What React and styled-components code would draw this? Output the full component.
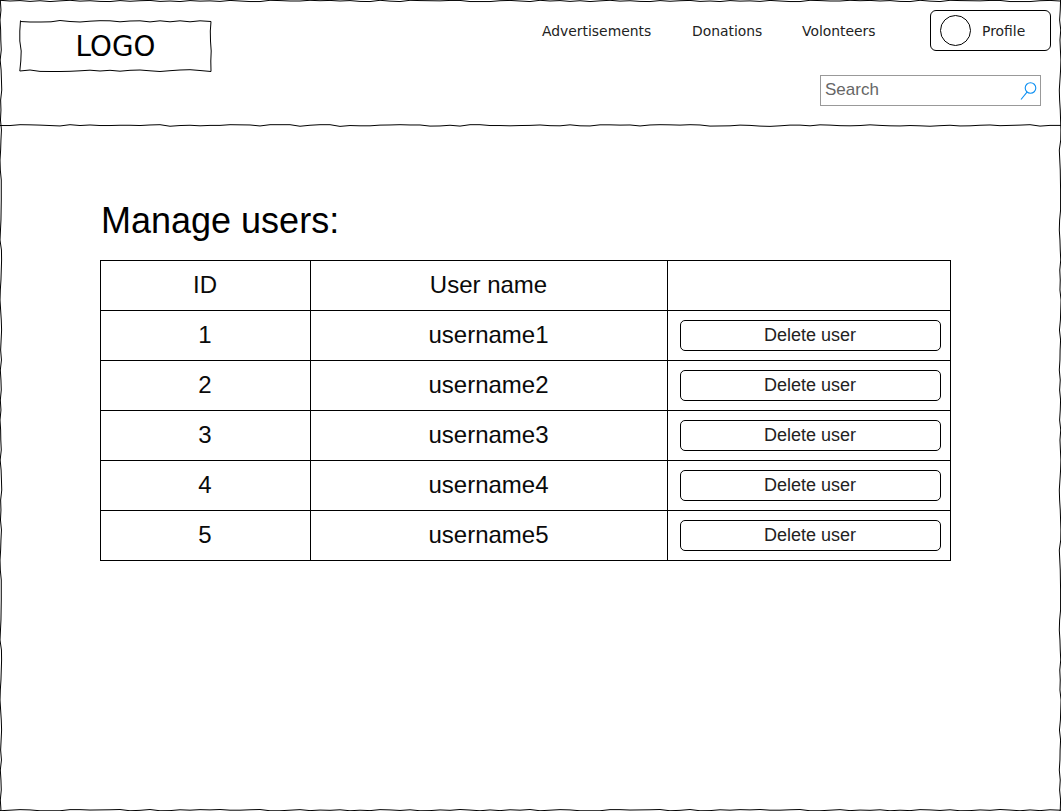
import React from "react";
import styled, { createGlobalStyle } from "styled-components";

const GlobalStyle = createGlobalStyle`
  *, *::before, *::after { box-sizing: border-box; }
  body { margin: 0; background: #fff; color: #000; overflow: hidden; }
`;

const sans = `"Liberation Sans", Arial, sans-serif`;
const ui = `"DejaVu Sans", Verdana, sans-serif`;

const Page = styled.div`
  position: relative;
  width: 1061px;
  height: 811px;
  font-family: ${sans};
`;

const Sketch = styled.svg`
  position: absolute;
  inset: 0;
  pointer-events: none;
  fill: none;
  stroke: #000;
  stroke-width: 1;
`;

const Header = styled.header`
  display: flex;
  justify-content: space-between;
  height: 126px;
  padding: 10px 10px 0 19px;
`;

const Logo = styled.div`
  position: relative;
  display: flex;
  align-items: center;
  justify-content: center;
  width: 193px;
  height: 52px;
  margin-top: 10px;
  padding-top: 1px;
  font: 27.8px/52px ${ui};
`;

const Side = styled.div`
  display: flex;
  flex-direction: column;
  align-items: flex-end;
`;

const Nav = styled.nav`
  display: flex;
  align-items: center;
  font: 13.9px/20px ${ui};
  color: #222;
`;

const NavLink = styled.a`
  width: ${(p) => p.$width}px;
  white-space: nowrap;
`;

const Profile = styled.button`
  display: flex;
  align-items: center;
  gap: 11px;
  width: 121px;
  height: 41px;
  padding: 0 0 0 9px;
  border: 1px solid #000;
  border-radius: 6px;
  background: #fff;
  color: #222;
  font: inherit;
`;

const Avatar = styled.span`
  width: 31px;
  height: 31px;
  border: 1px solid #000;
  border-radius: 50%;
`;

const Search = styled.label`
  display: flex;
  align-items: center;
  justify-content: space-between;
  width: 221px;
  height: 31px;
  margin: 24px 10px 0 0;
  padding: 0 3px 2px 4px;
  border: 1px solid #999;
  color: #666;
  font-size: 17px;
  line-height: 20px;
`;

const SearchIcon = styled.svg`
  width: 17px;
  height: 18px;
  margin-top: 3px;
  fill: none;
  stroke: #0c8ff2;
  stroke-width: 1.1;
`;

const Main = styled.main`
  padding: 74px 110px 0 100px;
`;

const Title = styled.h1`
  margin: 0 0 19px 1px;
  font-size: 36px;
  line-height: 41px;
  font-weight: 400;
`;

const Table = styled.div`
  width: 851px;
  border: solid #000;
  border-width: 1px 0 0 1px;
`;

const Row = styled.div`
  display: grid;
  grid-template-columns: 210px 357px 283px;
  height: 50px;
`;

const Cell = styled.div`
  display: flex;
  align-items: center;
  justify-content: center;
  padding-right: ${(p) => (p.$action ? 0 : 1)}px;
  padding-bottom: ${(p) => (p.$action ? 0 : 1)}px;
  border: solid #000;
  border-width: 0 1px 1px 0;
  color: #0a0a0a;
  font-size: 24px;
`;

const DeleteButton = styled.button`
  width: 261px;
  height: 31px;
  margin-left: 2px;
  padding: 0 0 1px;
  border: 1px solid #000;
  border-radius: 5px;
  background: #fff;
  color: #222;
  font: 18px/20px ${sans};
`;

const users = [1, 2, 3, 4, 5].map((id) => ({ id, name: `username${id}` }));

// Wobble offsets in tenths of a pixel, one for every ten pixels of a line.
const wobble = {
  top: [0, 5, 2, 8, 3, 9, 4, 0, 6, 3, 8, 9, 2, 7, 3, 1, 8, 5, 9, 2, 6, 4, 8, 1, 5, 9, 9, 0, 2, 5, 5, 0, 3, 1, 5, 2, 8, 9, 0, 6, 9, 0, 2, 3, 4, 1, 1, 9, 9, 9, 3, 1, 5, 9],
  rule: [6, 6, 0, 1, 3, 6, 9, 0, 6, 2, 6, 6, 4, 4, 6, 2, 0, 11, 6, 4, 8, 5, 5, 0, 1, 2, 9, 0, 0, 0, 11, 4, 0, 0, 12, 6, 8, 8, 3, 2, 0, 2, 2, 10, 9, 4, 10, 0, 0, 6, 6, 8, 6, 5, 2, 7, 8, 1, 8, 9, 1, 1, 3, 2, 9, 2, 0, 1, 3, 0, 2, 10, 9, 8, 3, 5, 10, 12, 8, 3, 3, 8, 1, 3, 7, 8, 6, 1, 5, 8, 9, 6, 8, 11, 7, 4, 9, 8, 4, 2, 7, 5, 3, 0, 10, 5, 5],
};

const horizontal = (y, length, list, amp = 1) => {
  let d = "";
  for (let x = 0; x < length; x += 10) {
    const offset = (list[(x / 10) % list.length] / 10) * amp;
    d += `${x ? "L" : "M"}${x} ${(y + offset).toFixed(2)}`;
  }
  return d + `L${length} ${y + 0.6}`;
};

const vertical = (x, length, list, amp = 1) => {
  let d = "";
  for (let y = 0; y < length; y += 10) {
    const offset = (list[(y / 10) % list.length] / 10) * amp;
    d += `${y ? "L" : "M"}${(x + offset).toFixed(2)} ${y}`;
  }
  return d + `L${x + 0.5} ${length}`;
};

const LOGO_OUTLINE =
  "M1.5 1.5L11 2L22 2L32 1.8L41 .5L51 1.5L61 2L71 1.2L81 .7L91 .8L101 1.8L111 1L121 .8L131 1.9L141 .8L151 1.8L161 .8L171 1.8L181 .8L192 1.5L191.3 11L191.5 21L192.2 31L191.8 41L192 51.5L181 50.5L171 49.7L161 50L151 50.7L141 51.5L131 50.8L121 50L111 50.3L101 51.2L91 50.3L81 51L71 50.2L61 50.8L51 51.3L41 51.5L31 51.5L21 51.4L11 50L.8 51L1.8 41L2.2 31L.8 21L.8 11L1.5 .5";

const side = [2, 6, 0, 4, 5, 8, 1, 7, 9, 11, 4, 6, 3, 9, 6, 4, 0, 2, 8, 8, 8, 7, 6, 3, 0, 9, 10, 8, 6, 2, 0, 4, 8, 10, 7, 4, 9, 2, 6, 8];

export default function App() {
  return (
    <>
      <GlobalStyle />
      <Page>
        <Header>
          <Logo>
            <Sketch width="193" height="53">
              <path d={LOGO_OUTLINE} />
            </Sketch>
            LOGO
          </Logo>
          <Side>
            <Nav>
              <NavLink $width={150}>Advertisements</NavLink>
              <NavLink $width={110}>Donations</NavLink>
              <NavLink $width={128}>Volonteers</NavLink>
              <Profile>
                <Avatar />
                Profile
              </Profile>
            </Nav>
            <Search>
              Search
              <SearchIcon viewBox="0 0 17 18">
                <circle cx="10.5" cy="6" r="5.3" />
                <path d="M7 10.2L1 17.5" />
              </SearchIcon>
            </Search>
          </Side>
        </Header>
        <Main>
          <Title>Manage users:</Title>
          <Table>
            <Row>
              <Cell>ID</Cell>
              <Cell>User name</Cell>
              <Cell />
            </Row>
            {users.map((user) => (
              <Row key={user.id}>
                <Cell>{user.id}</Cell>
                <Cell>{user.name}</Cell>
                <Cell $action>
                  <DeleteButton>Delete user</DeleteButton>
                </Cell>
              </Row>
            ))}
          </Table>
        </Main>
        <Sketch width="1061" height="811">
          <path d={horizontal(0.3, 1061, wobble.top, 1.4)} />
          <path d={horizontal(124.7, 1061, wobble.rule, 1.4)} />
          <path d={horizontal(809.5, 1061, wobble.top.slice().reverse(), 1.4)} />
          <path d={vertical(0, 811, side, 1.6)} />
          <path d={vertical(1059.3, 811, side.slice().reverse(), 1.6)} />
        </Sketch>
      </Page>
    </>
  );
}
